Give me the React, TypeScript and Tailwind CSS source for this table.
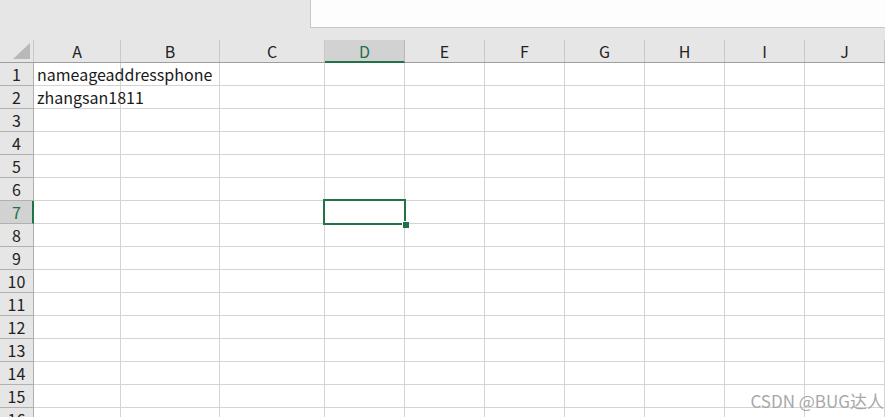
const cols = [
  { name: "A", w: "w-[87px]" },
  { name: "B", w: "w-[99px]" },
  { name: "C", w: "w-[105px]" },
  { name: "D", w: "w-[80px]" },
  { name: "E", w: "w-[80px]" },
  { name: "F", w: "w-[80px]" },
  { name: "G", w: "w-[80px]" },
  { name: "H", w: "w-[80px]" },
  { name: "I", w: "w-[80px]" },
  { name: "J", w: "w-[80px]" },
];

const data: Record<number, string> = {
  1: "nameageaddressphone",
  2: "zhangsan1811",
};

const rows = Array.from({ length: 16 }, (_, i) => i + 1);

export default function App() {
  return (
    <div className="relative w-[885px] h-[417px] overflow-hidden bg-white font-['Noto_Sans_CJK_SC','Noto_Sans',sans-serif] text-[#222]">
      {/* formula / title strip */}
      <div className="h-[40px] bg-[#e6e6e6]">
        <div className="ml-[310px] h-[28px] bg-[#fdfdfd] border-l border-b border-[#c6c6c6]" />
      </div>

      {/* column headers */}
      <div className="flex h-[23px] bg-[#e6e6e6] border-b border-[#9e9e9e]">
        <div className="w-[34px] shrink-0 border-r border-[#c8c8c8] flex items-end justify-end pr-[3px] pb-[3px]">
          <svg width="17" height="16" viewBox="0 0 17 16">
            <polygon points="17,0 17,16 0,16" fill="#b8b8b8" />
          </svg>
        </div>
        {cols.map((c) =>
          c.name === "D" ? (
            <div
              key={c.name}
              className={`${c.w} shrink-0 bg-[#d2d2d2] border-r border-[#b8b8b8] border-b-2 border-b-[#217346] -mb-px text-[#217346] text-[16px] leading-[20px] flex justify-center items-center`}
            >
              {c.name}
            </div>
          ) : (
            <div
              key={c.name}
              className={`${c.w} shrink-0 border-r border-[#c8c8c8] text-[16px] leading-[20px] flex justify-center items-center`}
            >
              {c.name}
            </div>
          )
        )}
      </div>

      {/* grid body */}
      {rows.map((r) => (
        <div key={r} className="flex h-[23px]">
          <div
            className={`w-[34px] shrink-0 border-b border-r border-[#b0b0b0] text-[16px] leading-[22px] text-center ${
              r === 7 ? "bg-[#d2d2d2] text-[#217346] border-r-2 border-r-[#217346] pl-px" : "bg-[#e6e6e6]"
            }`}
          >
            {r}
          </div>
          {cols.map((c, ci) => (
            <div
              key={c.name}
              className={`${c.w} shrink-0 border-b border-r border-[#d4d4d4] relative whitespace-nowrap text-[16px] leading-[22px] text-[#1a1a1a] pl-[3px]`}
            >
              {ci === 0 && data[r]}
              {r === 7 && c.name === "D" && (
                <div className="absolute z-10 left-[-2px] top-[-2px] w-[83px] h-[26px] border-2 border-[#217346]">
                  <div className="absolute right-[-5px] bottom-[-5px] w-[7px] h-[7px] bg-[#217346] border-l border-t border-white" />
                </div>
              )}
            </div>
          ))}
        </div>
      ))}

      <div className="absolute right-[1px] bottom-[6px] text-[17px] leading-[20px] text-[#a8a8a8]">CSDN @BUG达人</div>
    </div>
  );
}
